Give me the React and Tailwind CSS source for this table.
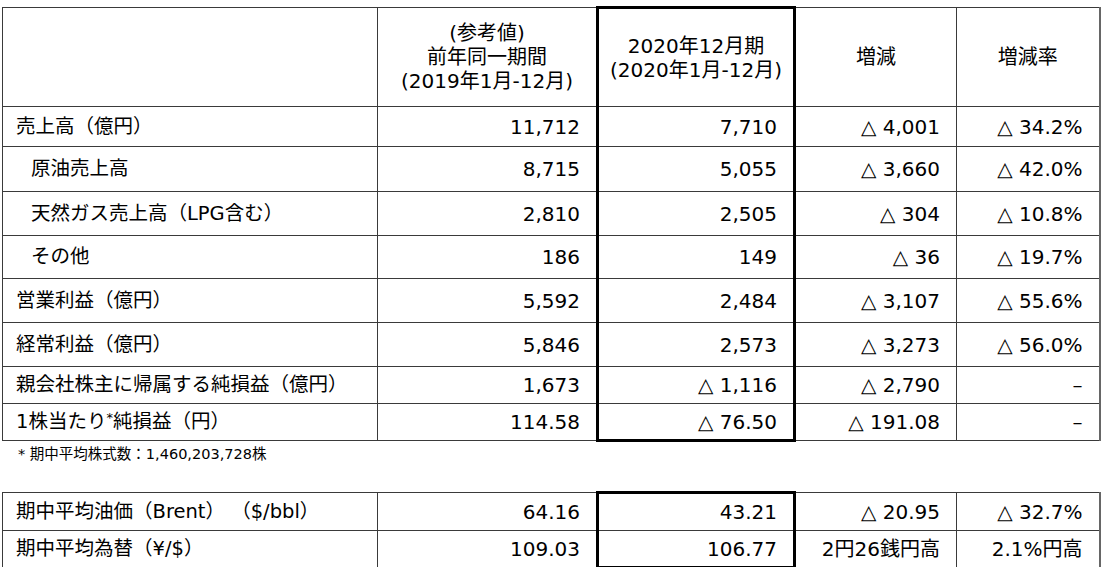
const rows = [
  { label: "売上高（億円）", indent: false, h: "h-[40px]", v: ["11,712", "7,710", "△ 4,001", "△ 34.2%"] },
  { label: "原油売上高", indent: true, h: "h-[45px]", v: ["8,715", "5,055", "△ 3,660", "△ 42.0%"] },
  { label: "天然ガス売上高（LPG含む）", indent: true, h: "h-[44px]", v: ["2,810", "2,505", "△ 304", "△ 10.8%"] },
  { label: "その他", indent: true, h: "h-[43px]", v: ["186", "149", "△ 36", "△ 19.7%"] },
  { label: "営業利益（億円）", indent: false, h: "h-[44px]", v: ["5,592", "2,484", "△ 3,107", "△ 55.6%"] },
  { label: "経常利益（億円）", indent: false, h: "h-[44px]", v: ["5,846", "2,573", "△ 3,273", "△ 56.0%"] },
  { label: "親会社株主に帰属する純損益（億円）", indent: false, h: "h-[37px]", v: ["1,673", "△ 1,116", "△ 2,790", "–"] },
  { label: "eps", indent: false, h: "h-[37px]", v: ["114.58", "△ 76.50", "△ 191.08", "–"] },
];

const market = [
  { label: "期中平均油価（Brent） （$/bbl）", h: "h-[38px]", v: ["64.16", "43.21", "△ 20.95", "△ 32.7%"] },
  { label: "期中平均為替（¥/$）", h: "h-[37px]", v: ["109.03", "106.77", "2円26銭円高", "2.1%円高"] },
];

const cell = "border border-[#3a3a3a] px-[16px] text-right align-middle text-[20px] leading-none";
const box = "border-x-[3px] border-x-black";

function Cols() {
  return (
    <colgroup>
      <col className="w-[375px]" />
      <col className="w-[220px]" />
      <col className="w-[197px]" />
      <col className="w-[162px]" />
      <col className="w-[143px]" />
    </colgroup>
  );
}

function Label({ text }) {
  if (text === "eps") {
    return (
      <>
        1株当たり<span className="text-[13px] relative -top-[6px]">*</span>純損益（円）
      </>
    );
  }
  return text;
}

export default function App() {
  return (
    <div className="w-[1109px] h-[567px] bg-white text-black font-['DejaVu_Sans','Noto_Sans_CJK_JP',sans-serif] pt-[6px] pl-[2px] overflow-hidden">
      <table className="table-fixed border-collapse w-[1097px]">
        <Cols />
        <thead>
          <tr className="h-[99px]">
            <th className="border border-[#3a3a3a]"></th>
            <th className="border border-[#3a3a3a] font-normal text-[20px] leading-[24px] text-center">
              (参考値)<br />前年同一期間<br />(2019年1月-12月)
            </th>
            <th className={`border border-[#3a3a3a] ${box} border-t-[3px] border-t-black font-normal text-[20px] leading-[24px] text-center`}>
              2020年12月期<br />(2020年1月-12月)
            </th>
            <th className="border border-[#3a3a3a] font-normal text-[20px] text-center">増減</th>
            <th className="border border-[#3a3a3a] border-r-2 border-r-[#666] font-normal text-[20px] text-center">増減率</th>
          </tr>
        </thead>
        <tbody>
          {rows.map((r, i) => (
            <tr key={r.label} className={r.h}>
              <td className={`border border-[#3a3a3a] text-[19.5px] leading-none whitespace-nowrap ${r.indent ? "pl-[28px]" : "pl-[13px]"}`}>
                <Label text={r.label} />
              </td>
              <td className={cell}>{r.v[0]}</td>
              <td className={`${cell} ${box} ${i === rows.length - 1 ? "border-b-[3px] border-b-black" : ""}`}>{r.v[1]}</td>
              <td className={cell}>{r.v[2]}</td>
              <td className={`${cell} border-r-2 border-r-[#666]`}>{r.v[3]}</td>
            </tr>
          ))}
        </tbody>
      </table>

      <p className="text-[14.5px] leading-none pl-[16px] mt-[5px] h-[44px]">* 期中平均株式数：1,460,203,728株</p>

      <table className="table-fixed border-collapse w-[1097px]">
        <Cols />
        <tbody>
          {market.map((r, i) => (
            <tr key={r.label} className={r.h}>
              <td className="border border-[#3a3a3a] text-[19.5px] leading-none whitespace-pre pl-[13px]">{r.label}</td>
              <td className={cell}>{r.v[0]}</td>
              <td className={`${cell} ${box} ${i === 0 ? "border-t-[3px] border-t-black" : "border-b-[3px] border-b-black"}`}>{r.v[1]}</td>
              <td className={cell}>{r.v[2]}</td>
              <td className={`${cell} border-r-2 border-r-[#666]`}>{r.v[3]}</td>
            </tr>
          ))}
        </tbody>
      </table>
    </div>
  );
}
